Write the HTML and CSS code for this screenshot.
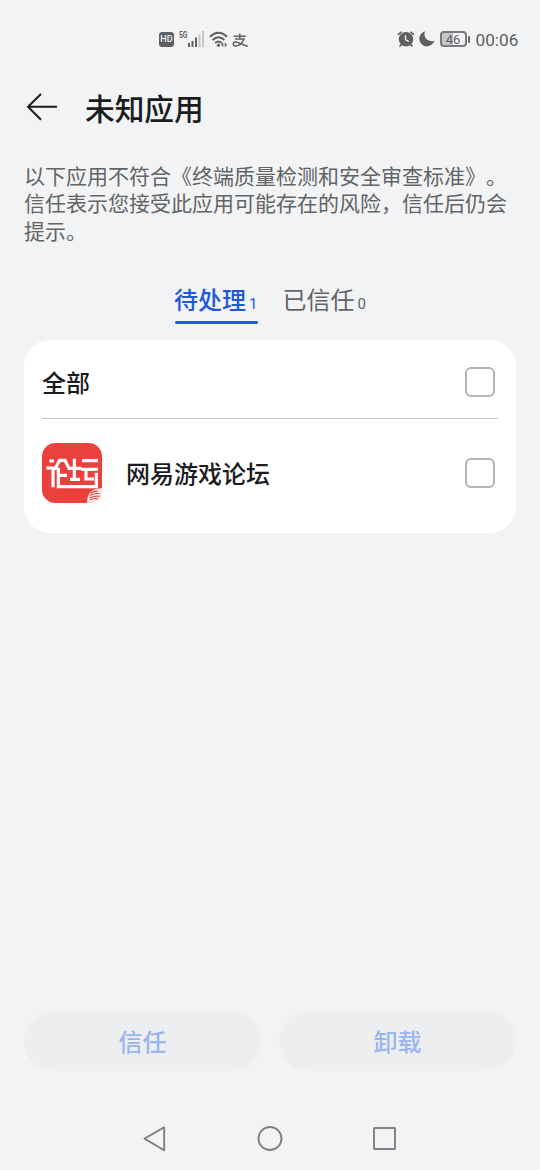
FILE: index.html
```html
<!DOCTYPE html>
<html lang="zh-CN">
<head>
<meta charset="utf-8">
<title>未知应用</title>
<link rel="stylesheet" href="styles.css">
</head>
<body>
<div class="screen">
  <div class="status">
    <div class="status-left">
      <span class="hd">HD</span>
      <span class="net">5G</span>
      <svg class="signal" width="17" height="16" viewBox="0 0 17 16"><g fill="#5d5f61"><rect x="0" y="12" width="2" height="4"/><rect x="3.5" y="10" width="2" height="6"/><rect x="7" y="6.5" width="2" height="9.5"/></g><g fill="#c3c5c7"><rect x="10.5" y="3.5" width="2" height="12.5"/><rect x="14" y="0" width="2" height="16"/></g></svg>
      <svg class="wifi" width="20" height="17" viewBox="0 0 20 17" fill="none" stroke="#5d5f61" stroke-width="1.9"><path d="M1 5.8Q9.5-2.4 18 5.8M3.6 9Q9.5 3.3 15.4 9M6.2 12Q9.5 8.9 12.8 12"/><path d="M9.5 12.2l2 2-2 2-2-2z" fill="#5d5f61" stroke="none"/><path d="M14.3 11.2v5l-2.2-2.5zM15.8 11.2v5l2.2-2.5z" fill="#5d5f61" stroke="none"/></svg>
      <svg class="pay" width="17" height="15" viewBox="0 0 17 15" fill="none" stroke="#5d5f61" stroke-width="1.5"><path d="M1.8 3.3H13.8M7.8.4v5.4M3 6.1h9C10.8 9.4 7.8 12.9 3.4 12.9.7 12.9.4 9.3 3.5 9.1c3.6-.1 7.3 3.3 12.3 4.2"/></svg>
    </div>
    <div class="status-right">
      <svg class="alarm" width="18" height="18" viewBox="0 0 18 18" fill="none" stroke="#5d5f61"><circle cx="9" cy="9.3" r="7.2" fill="#5d5f61" stroke="none"/><path d="M1 4.8l3.5-3M17 4.8l-3.5-3M4.2 14.6L2.6 16.5M13.8 14.6l1.6 1.9" stroke-width="1.7"/><path d="M8.5 5.3v4.4l3.4 2" stroke="#f1f3f5" stroke-width="1.4"/></svg>
      <svg class="moon" width="16" height="16" viewBox="0 0 16 16"><path d="M6 .3C4 6.5 8 11 15.6 10 12.8 15.4 7 17.2 3 13.6-1.7 9 0 2.3 6 .3z" fill="#5d5f61"/></svg>
      <div class="battery"><span>46</span></div><i class="cap"></i>
      <span class="clock">00:06</span>
    </div>
  </div>

  <header class="header">
    <svg width="32" height="28" viewBox="0 0 32 28" fill="none" stroke="#1b1c1e" stroke-width="2" stroke-linejoin="round"><path d="M15 1L2 13.7 15 26.7M2 13.7h29"/></svg>
    <h1>未知应用</h1>
  </header>

  <p class="desc">以下应用不符合《终端质量检测和安全审查标准》。<br>信任表示您接受此应用可能存在的风险，信任后仍会<br>提示。</p>

  <nav class="tabs">
    <div class="tab active">待处理<small>1</small></div>
    <div class="tab">已信任<small>0</small></div>
  </nav>

  <main class="card">
    <div class="row all"><span class="name">全部</span><span class="check"></span></div>
    <div class="row app">
      <svg class="logo" width="60" height="60" viewBox="0 0 180 180">
        <defs><clipPath id="tile"><rect width="180" height="180" rx="40"/></clipPath></defs>
        <g clip-path="url(#tile)">
          <rect width="180" height="180" fill="#ea403e"/>
          <g fill="none" stroke="#fff" stroke-width="9.5">
            <path d="M22 54h14M13 75h20v58M38 80L53 52h16l14 28M49 74v57h114V89M49 97h26M80 76h38M97 47v60M84 109h30M120 53h48M118 79h50M132 79v29h24"/>
          </g>
          <path d="M135 180c0-28 13-43 45-44v44z" fill="#fde9e8"/>
          <g fill="none" stroke="#e5504d" stroke-width="3.6" stroke-linecap="round"><path d="M148 150q10-7 18-5M145 157q12-7 26-5M144 164q13-6 27-4M146 170q11-5 20-3"/></g>
        </g>
      </svg>
      <span class="name">网易游戏论坛</span><span class="check"></span>
    </div>
  </main>

  <footer class="actions">
    <button class="btn">信任</button>
    <button class="btn">卸载</button>
  </footer>

  <div class="navbar">
    <svg width="254" height="28" viewBox="0 0 254 28" fill="none" stroke="#7e8083" stroke-width="1.9" stroke-linejoin="round"><path d="M21.2 3.3v23L1.5 14.6z"/><circle cx="127" cy="14.5" r="11.5"/><rect x="231" y="4" width="21" height="21" rx=".5"/></svg>
  </div>
</div>
</body>
</html>
```
FILE: styles.css
```css
* { box-sizing: border-box; }
body {
  margin: 0;
  background: #f1f3f5;
  color: #1b1c1e;
  font-family: Roboto, "Noto Sans CJK SC", sans-serif;
  text-spacing-trim: space-all;
}
.screen { display: flex; flex-direction: column; width: 540px; height: 1170px; }

.status {
  display: flex;
  justify-content: space-between;
  height: 78px;
  padding: 0 22px 0 159px;
  color: #5d5f61;
}
.status-left, .status-right { display: flex; align-items: center; height: 78px; }
.hd {
  width: 15px; height: 15px; margin-top: 1px;
  border-radius: 3px;
  background: #5d5f61; color: #f1f3f5;
  font-size: 9px; font-weight: 500; line-height: 15px; text-align: center;
}
.net {
  width: 9px; margin: -9px 0 0 5px;
  font-size: 9px; font-weight: 700; line-height: 10px;
  transform: scaleX(.75); transform-origin: left;
}
.signal { margin: 0 4px 0 0; }
.wifi { margin-top: 1px; }
.pay { margin: 2px 0 0 3px; }
.alarm { margin-right: 4px; }
.moon { margin-right: 5px; }
.battery {
  width: 27px; height: 16px;
  border: 2px solid #77797b; border-radius: 4px;
  background: linear-gradient(90deg, #c4c6c8 46%, transparent 46%);
  background-clip: padding-box;
  font-size: 13px; line-height: 13px; text-align: center;
}
.battery span { display: block; margin: 0 -2px; }
.cap { width: 2px; height: 7px; margin: 0 6px 0 1px; border-radius: 1px; background: #66686a; }
.clock { width: 42.5px; font-size: 17.2px; line-height: 20px; margin-top: 2px; }

.header { display: flex; align-items: center; gap: 27px; height: 58px; padding-left: 26px; }
.header h1 { margin: 5px 0 0; font-size: 29.7px; font-weight: 500; line-height: 40px; }

.desc { margin: 27.5px 0 0; padding-left: 24px; color: #626466; font-size: 21px; line-height: 27.7px; white-space: nowrap; }

.tabs { display: flex; justify-content: center; gap: 25px; margin-top: 34px; height: 43px; }
.tab { height: 43px; color: #626466; font-size: 24px; line-height: 40px; }
.tab small { margin-left: 3px; font-size: 15px; }
.tab.active { position: relative; color: #1f58dc; font-weight: 500; }
.tab.active small { font-weight: 400; }
.tab.active::after { content: ""; position: absolute; left: 1px; right: 0; bottom: 0; height: 3px; border-radius: 2px; background: #1f58dc; }

.card { width: 492px; height: 193px; margin: 16.4px 24px 0; padding: 6px 18px; border-radius: 26px; background: #fff; }
.row { display: flex; align-items: center; padding-right: 3px; }
.all { height: 72px; }
.app { height: 109px; background: linear-gradient(#c2c3c5, #c2c3c5) 0 0 / 100% 1px no-repeat; }
.logo { margin-right: 24px; }
.name { flex: 1; padding-top: 3px; font-size: 24px; font-weight: 500; line-height: 36px; }
.app .name { padding-top: 5px; }
.check { width: 30px; height: 30px; border: 2px solid #b2b3b5; border-radius: 6px; }

.actions { display: flex; gap: 18px; margin-top: auto; padding: 0 24px; }
.btn {
  flex: 1; height: 60px; padding: 4px 0 0;
  border: 0; border-radius: 30px;
  background: #eceeef; color: #9bb5ef;
  font: 500 24px/56px Roboto, "Noto Sans CJK SC", sans-serif;
}
.navbar { display: flex; justify-content: center; height: 99px; padding-top: 53px; }
```
